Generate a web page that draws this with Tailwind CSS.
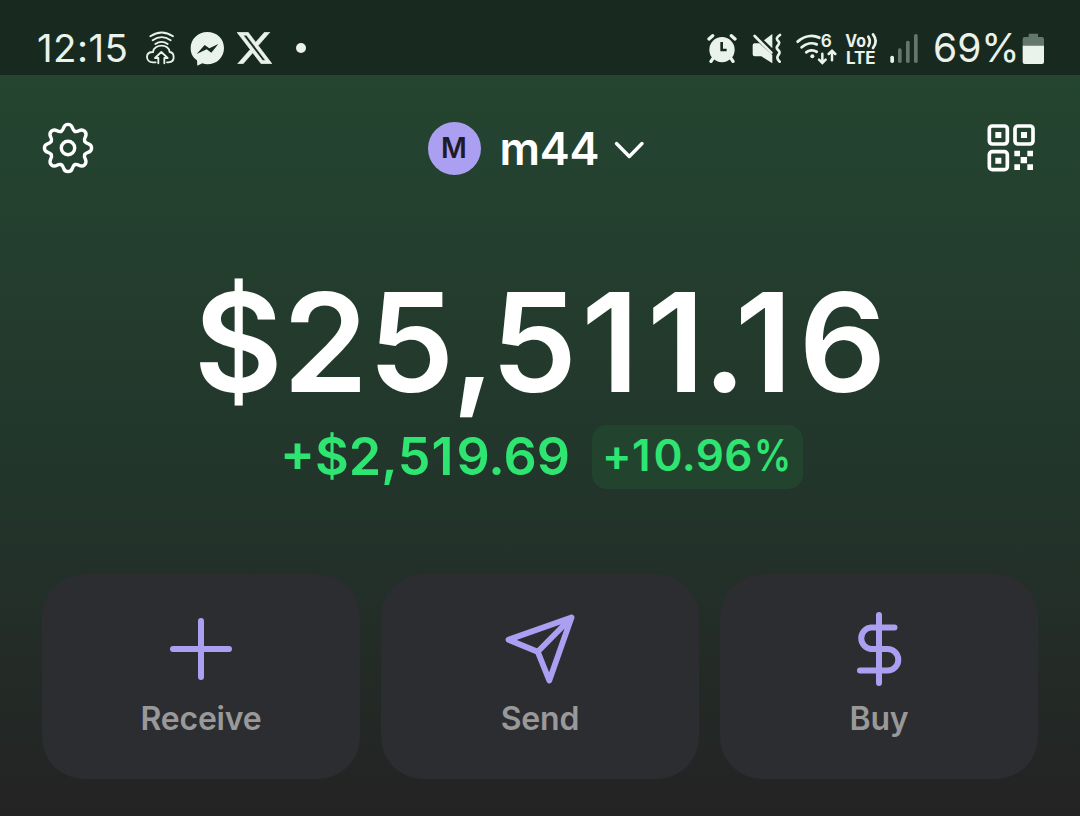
<!DOCTYPE html>
<html lang="en">
  <head>
    <meta charset="UTF-8" />
    <meta name="viewport" content="width=device-width, initial-scale=1.0" />
    <title>Wallet</title>
    <script src="https://cdn.jsdelivr.net/npm/@tailwindcss/browser@4"></script>
  </head>

  <body
    class="w-[1080px] h-[816px] overflow-hidden flex flex-col bg-[#232424] font-['Inter',sans-serif] text-white"
  >
    <!-- Status bar -->
    <div
      class="h-[75px] shrink-0 flex items-start justify-between bg-[#182a1f] text-[#eaf2ec] pl-[37px] pr-[35px]"
    >
      <div class="flex items-start">
        <span class="w-[108px] pt-[28px] text-[38.5px] leading-[40px] tracking-[0.4px]">12:15</span>
        <svg class="w-[30px] h-[36px] mt-[30px]" viewBox="0 0 90 108" fill="none" stroke="currentColor" stroke-width="5.5" stroke-linecap="round">
          <path d="M16 19Q50 -4 84 19M23 31Q50 12 77 31M31 42Q50 29 68 42" />
          <path d="M32 97H24C12 97 6 89 6 81C6 71 14 66 24 66C25 53 38 47 50 47S73 54 74 66C83 67 86 75 86 82C86 91 80 97 70 97H66" />
          <path d="M40 100V84H30L49 66L68 84H58V100" stroke-linejoin="round" />
        </svg>
        <svg class="w-[35px] h-[35px] mt-[31px] ml-[15px]" viewBox="0 0 105 105">
          <path fill="currentColor" d="M52 3C24 3 2 24 2 51C2 68 9 80 21 88L22 104L37 97C42 99 47 100 52 100C80 100 102 79 102 51S80 3 52 3Z" />
          <path fill="#182a1f" d="M20 69L44 42L58 52L85 39L64 65L50 55Z" />
        </svg>
        <svg class="w-[35px] h-[32px] mt-[32px] ml-[12px]" viewBox="1.25 2.25 21.6 19.5" fill="currentColor" stroke="currentColor" stroke-width="0.4">
          <path d="M18.244 2.25h3.308l-7.227 8.26 8.502 11.24H16.17l-5.214-6.817L4.99 21.75H1.68l7.73-8.835L1.254 2.25H8.08l4.713 6.231zm-1.161 17.52h1.833L7.084 4.126H5.117z" />
        </svg>
        <span class="size-[10px] rounded-full bg-[#eaf2ec] mt-[43px] ml-[24px]"></span>
      </div>

      <div class="flex items-start">
        <!-- Alarm -->
        <svg class="w-[30px] h-[30px] mt-[33px]" viewBox="0 0 90 90" fill="none" stroke="currentColor" stroke-width="10" stroke-linecap="round">
          <circle cx="45" cy="50" r="38" fill="currentColor" stroke="none" />
          <path d="M6 18L17 8M73 8L84 18M18 76L12 85M72 76L78 85" />
          <path d="M44 27V51H59" stroke="#182a1f" stroke-width="8" stroke-linecap="butt" />
        </svg>
        <!-- Sound off -->
        <svg class="w-[31px] h-[31px] mt-[33px] ml-[15px]" viewBox="0 0 93 93">
          <path fill="currentColor" d="M36 22L61 3V46ZM2 37Q2 31 8 31H22L61 66V91L28 70H8Q2 70 2 64Z" />
          <path fill="none" stroke="currentColor" stroke-width="8" stroke-linecap="round" d="M8 9L58 59M84 6C70 16 74 20 80 26C86 33 74 38 74 44S86 54 82 61C78 69 70 74 83 86" />
        </svg>
        <!-- Wi-Fi 6 -->
        <svg class="w-[41px] h-[32px] mt-[33px] ml-[13px] overflow-visible" viewBox="0 0 123 96" fill="none" stroke="currentColor" stroke-width="8.5" stroke-linecap="round">
          <path d="M5 26C25 8 50 5 70 14M17 43C30 31 48 28 62 34M31 58C38 51 52 50 62 56" />
          <circle cx="49" cy="70" r="6" fill="currentColor" stroke="none" />
          <path stroke-width="7.5" d="M79 62V88M69 80L79 90L89 80M108 82V54M98 63L108 53L118 63" />
          <text x="74" y="43" fill="currentColor" stroke="none" font-size="52" font-weight="600">6</text>
        </svg>
        <!-- VoLTE -->
        <svg class="w-[34px] h-[36px] mt-[30px] ml-[8px] overflow-visible" viewBox="0 0 102 108" fill="currentColor">
          <text x="1" y="50" font-size="51" font-weight="700" textLength="62" lengthAdjust="spacingAndGlyphs">Vo</text>
          <text x="3" y="102" font-size="51" font-weight="700" textLength="89" lengthAdjust="spacingAndGlyphs">LTE</text>
          <path fill="none" stroke="currentColor" stroke-width="8" stroke-linecap="round" d="M70 20Q79 34 70 48M84 13Q100 33 84 54" />
        </svg>
        <!-- Signal -->
        <svg class="w-[30px] h-[30px] mt-[33px] ml-[10px]" viewBox="0 0 90 90">
          <rect x="4" y="68" width="11" height="22" rx="5" fill="currentColor" />
          <g fill="#65766c">
            <rect x="27" y="46" width="11" height="44" rx="5" />
            <rect x="51" y="23" width="11" height="67" rx="5" />
            <rect x="75" y="3" width="11" height="87" rx="5" />
          </g>
        </svg>
        <span class="w-[89px] pt-[28px] ml-[14px] text-[39px] leading-[40px]">69%</span>
        <svg class="w-[23px] h-[32px] mt-[33px]" viewBox="0 0 69 96">
          <path fill="#65766c" d="M20 2H48V12H60Q66 12 66 18V40H2V18Q2 12 8 12H20Z" />
          <path fill="currentColor" d="M2 38H66V87Q66 93 60 93H8Q2 93 2 87Z" />
        </svg>
      </div>
    </div>

    <main
      class="flex-1 flex flex-col bg-linear-to-b from-[#244530] via-[#22352b] via-55% to-[#232323]"
    >
      <header class="flex items-center justify-between pt-[46px] pl-[41px] pr-[45px]">
        <!-- Settings -->
        <svg class="size-[54px]" viewBox="-27 -27 54 54" fill="none" stroke="currentColor" stroke-width="3.4" stroke-linecap="round">
          <path id="tooth" d="M-6.9 -16.6C-3.2 -18.1 -5.9 -23.6 0 -23.6C5.9 -23.6 3.2 -18.1 6.9 -16.6" />
          <use href="#tooth" transform="rotate(45)" />
          <use href="#tooth" transform="rotate(90)" />
          <use href="#tooth" transform="rotate(135)" />
          <use href="#tooth" transform="rotate(180)" />
          <use href="#tooth" transform="rotate(225)" />
          <use href="#tooth" transform="rotate(270)" />
          <use href="#tooth" transform="rotate(315)" />
          <circle r="6.7" />
        </svg>

        <!-- Account -->
        <div class="flex items-center mr-[10px]">
          <span class="size-[53px] rounded-full bg-[#ab9ff2] text-[#1e1b26] text-[28px] font-semibold flex items-center justify-center">M</span>
          <span class="w-[100px] ml-[19px] text-[45px] leading-[53px] font-semibold tracking-[-0.2px]">m44</span>
          <svg class="w-[32px] h-[22px] ml-[13px] mt-[3px]" viewBox="0 0 32 22" fill="none" stroke="currentColor" stroke-width="3.4" stroke-linecap="round" stroke-linejoin="round">
            <path d="M3.5 4.5L16.3 17.5L29 4.5" />
          </svg>
        </div>

        <!-- QR code -->
        <svg class="size-[48px]" viewBox="0 0 144 144" fill="currentColor">
          <g fill="none" stroke="currentColor" stroke-width="11">
            <rect x="7" y="6" width="54" height="54" rx="9" />
            <rect x="84" y="6" width="54" height="54" rx="9" />
            <rect x="7" y="83" width="54" height="54" rx="9" />
          </g>
          <path d="M25 24h18v18H25zM102 24h18v18h-18zM25 101h18v18H25zM82 80h17v17H82zM121 80h17v17h-17zM101 99h19v19h-19zM82 121h17v17H82zM121 121h17v17h-17z" />
        </svg>
      </header>

      <!-- Balance -->
      <h1 class="mt-[95px] text-center text-[137px] leading-[144px] font-semibold whitespace-nowrap">$2<span class="tracking-[-2.5px]">5</span><span class="tracking-[-4.5px]">,</span><span class="tracking-[4px]">5</span><span class="tracking-[8px]">1</span><span class="tracking-[-2.4px]">1</span><span class="tracking-[-11.6px]">.</span><span class="tracking-[6px]">1</span>6</h1>
      <div class="mt-[11px] h-[64px] flex items-center justify-center gap-[22px] text-[#2ee572] font-semibold pl-[3px]">
        <span class="text-[52px] leading-[64px]">+$2,<span class="tracking-[1px]">5</span><span class="tracking-[3px]">1</span>9.69</span>
        <span class="w-[211px] h-[64px] rounded-[15px] bg-[#22442f] text-[44px] leading-[61px] pl-[10px] whitespace-nowrap tracking-[0.4px]">+<span class="tracking-[3px]">1</span>0.96<span class="inline-block origin-left scale-x-[0.84] ml-[1px]">%</span></span>
      </div>

      <!-- Actions -->
      <div class="mt-[85px] px-[42px] grid grid-cols-3 gap-[21px] text-[#999999] text-[32px] leading-[40px] font-semibold tracking-[-0.2px]">
        <button class="h-[205px] rounded-[42px] bg-[#2c2d30] flex flex-col items-center pt-[36px]">
          <svg class="size-[78px]" viewBox="0 0 78 78" fill="none" stroke="#ab9ff2" stroke-width="6" stroke-linecap="round">
            <path d="M39 11V67M11 39H67" />
          </svg>
          <span class="mt-[11px]">Receive</span>
        </button>
        <button class="h-[205px] rounded-[42px] bg-[#2c2d30] flex flex-col items-center pt-[36px]">
          <svg class="size-[78px]" viewBox="0 0 78 78" fill="none" stroke="#ab9ff2" stroke-width="5.8" stroke-linecap="round" stroke-linejoin="round">
            <path d="M70.5 7.5L7.5 29.7L36.7 41.7L48.3 70.5ZM70.5 7.5L36.7 41.7" />
          </svg>
          <span class="mt-[11px]">Send</span>
        </button>
        <button class="h-[205px] rounded-[42px] bg-[#2c2d30] flex flex-col items-center pt-[36px]">
          <svg class="size-[78px]" viewBox="0 0 78 78" fill="none" stroke="#ab9ff2" stroke-width="6" stroke-linecap="round">
            <path d="M39 5V73M54.5 17.5H31A10.8 10.8 0 0 0 31 39H47.5A10.8 10.8 0 0 1 47.5 60.6H20" />
          </svg>
          <span class="mt-[11px]">Buy</span>
        </button>
      </div>
    </main>
  </body>
</html>
